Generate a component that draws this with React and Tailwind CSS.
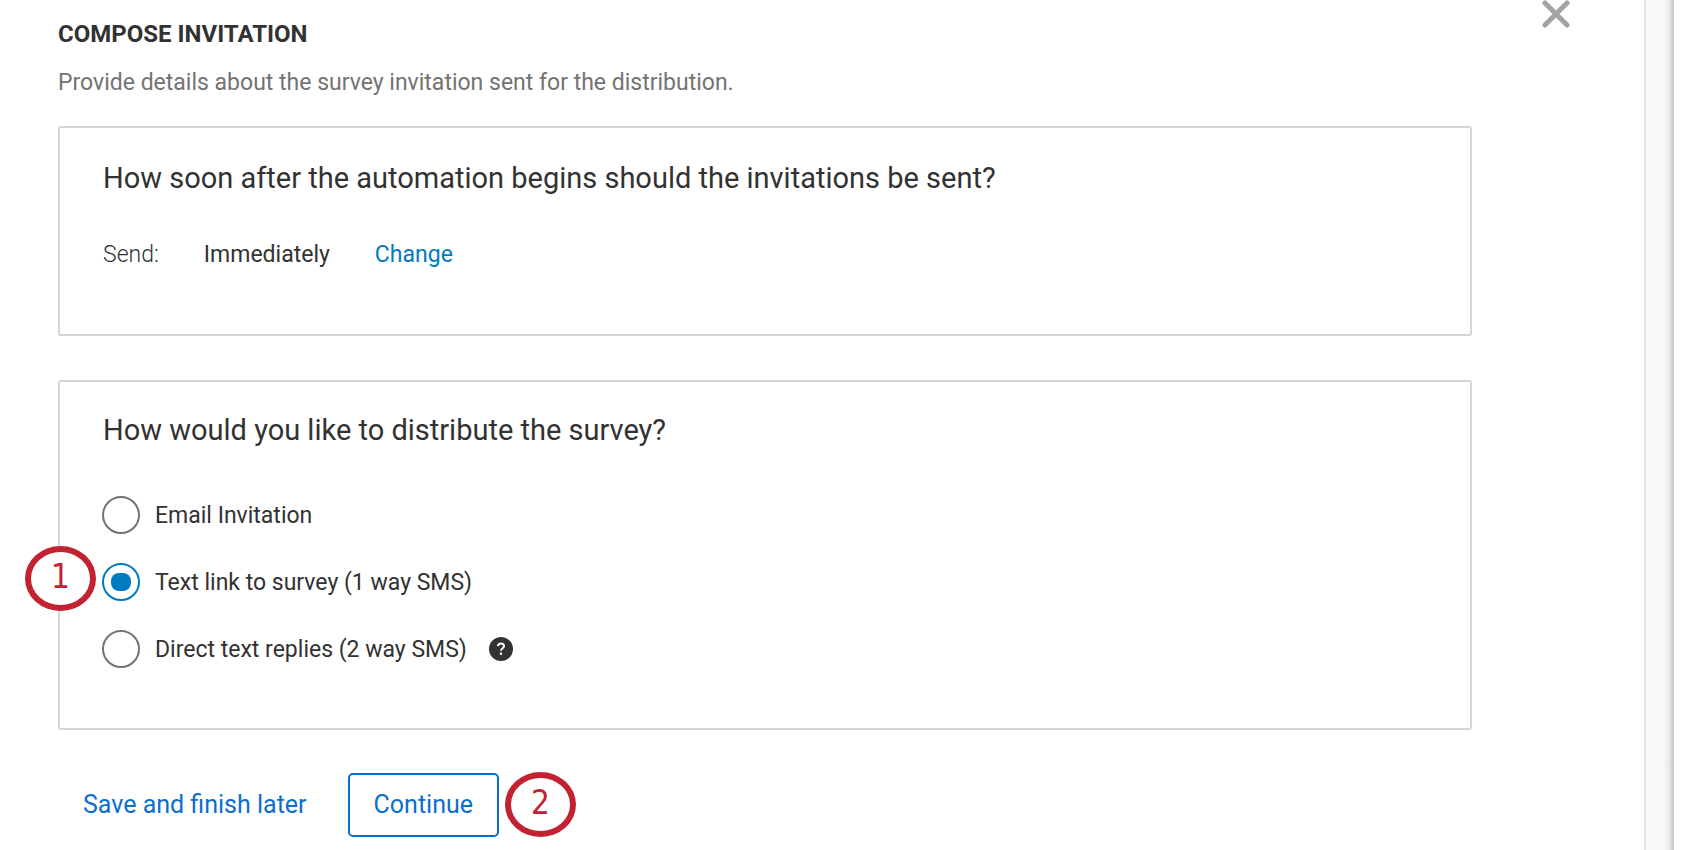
import { useState } from 'react';

const OPTIONS = [
  { id: 'email', label: 'Email Invitation' },
  { id: 'sms-link', label: 'Text link to survey (1 way SMS)', step: 1 },
  { id: 'sms-replies', label: 'Direct text replies (2 way SMS)', help: true },
];

function StepBadge({ number, className = '' }) {
  return (
    <span
      className={`flex h-[65px] w-[71px] items-center justify-center rounded-[50%] border-[6px] border-[#c32232] bg-white pb-1 font-['DejaVu_Sans_Condensed','DejaVu_Sans',sans-serif] text-[33px] leading-none text-[#c32232] ${className}`}
    >
      {number}
    </span>
  );
}

function CloseIcon() {
  return (
    <svg viewBox="0 0 28 28" className="h-7 w-7" fill="none" stroke="#a3a3a3" strokeWidth="5" strokeLinecap="round">
      <path d="M3 3l22 22M25 3L3 25" />
    </svg>
  );
}

function HelpIcon() {
  return (
    <svg viewBox="0 0 24 24" className="h-6 w-6">
      <circle cx="12" cy="12" r="12" fill="#323232" />
      <path
        d="M8.9 9.2c.2-1.7 1.4-2.7 3.1-2.7 1.8 0 3 1 3 2.5 0 1.2-.6 1.8-1.6 2.5-1 .7-1.4 1.1-1.4 2.3"
        fill="none"
        stroke="#fff"
        strokeWidth="2"
      />
      <rect x="10.9" y="15.6" width="2.2" height="2.2" fill="#fff" />
    </svg>
  );
}

export default function App() {
  const [selected, setSelected] = useState('sms-link');

  return (
    <div className="flex min-h-screen bg-white pr-[26px] font-[Roboto,sans-serif] text-[23px] leading-8 text-[#323232]">
      <main className="flex flex-1 items-start border-r-2 border-[#e6e6e6] pl-[58px] pr-[74px]">
        <div className="flex-1 pt-[18px]">
          <h1 className="text-[24px] leading-8 font-bold">COMPOSE INVITATION</h1>
          <p className="mt-[17px] text-[#737373]">
            Provide details about the survey invitation sent for the distribution.
          </p>

          <section className="mt-[27px] rounded-[3px] border-2 border-[#d6d6d6] px-[43px] pt-8 pb-[63px]">
            <h2 className="text-[29px] leading-9">
              How soon after the automation begins should the invitations be sent?
            </h2>
            <div className="mt-[43px] flex gap-[45px]">
              <span className="font-light">Send:</span>
              <span>Immediately</span>
              <button type="button" className="text-[#007ac0]">Change</button>
            </div>
          </section>

          <section className="mt-11 rounded-[3px] border-2 border-[#d6d6d6] px-[43px] pt-[30px] pb-[60px]">
            <h2 id="distribute-heading" className="text-[29px] leading-9">
              How would you like to distribute the survey?
            </h2>
            <div role="radiogroup" aria-labelledby="distribute-heading" className="mt-12 flex flex-col gap-[29px]">
              {OPTIONS.map((option) => (
                <div key={option.id} className="relative -ml-px flex items-center">
                  {option.step && <StepBadge number={option.step} className="absolute right-full bottom-[-10px] mr-1.5" />}
                  <input
                    type="radio"
                    id={option.id}
                    name="distribution"
                    checked={selected === option.id}
                    onChange={() => setSelected(option.id)}
                    className="grid h-[38px] w-[38px] shrink-0 appearance-none place-content-center rounded-full border-2 border-[#737373] checked:border-[#007ac0] checked:before:h-[18px] checked:before:w-5 checked:before:rounded-lg checked:before:bg-[#007ac0] checked:before:content-['']"
                  />
                  <label htmlFor={option.id} className="pt-0.5 pl-[15px]">{option.label}</label>
                  {option.help && (
                    <button type="button" aria-label="Help" className="ml-[22px]">
                      <HelpIcon />
                    </button>
                  )}
                </div>
              ))}
            </div>
          </section>

          <div className="mt-[42px] flex items-center pl-[25px] text-[25px] text-[#0b6ed0]">
            <button type="button">Save and finish later</button>
            <button type="button" className="ml-[41px] h-16 rounded-[5px] border-2 border-[#0b6ed0] px-6">
              Continue
            </button>
            <StepBadge number={2} className="ml-1.5" />
          </div>
        </div>

        <button type="button" aria-label="Close" className="ml-[70px]">
          <CloseIcon />
        </button>
      </main>
      <div className="w-7 bg-linear-to-r from-[#fafafa] from-60% via-[#ececec] via-80% to-[#c6c6c6]" />
    </div>
  );
}
